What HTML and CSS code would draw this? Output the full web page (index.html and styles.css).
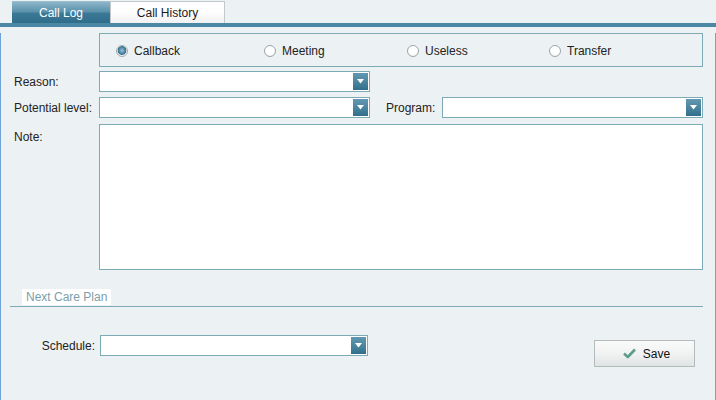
FILE: index.html
```html
<!DOCTYPE html>
<html>
<head>
<meta charset="utf-8">
<link rel="stylesheet" href="styles.css">
</head>
<body>
<div class="tabs">
  <div class="tab tab-active">Call Log</div>
  <div class="tab tab-plain">Call History</div>
</div>
<div class="strip"></div>
<div class="panel">
  <div class="radio-box">
    <label class="radio"><span class="dot dot-on"></span>Callback</label>
    <label class="radio"><span class="dot"></span>Meeting</label>
    <label class="radio"><span class="dot"></span>Useless</label>
    <label class="radio"><span class="dot"></span>Transfer</label>
  </div>

  <div class="row row-reason">
    <span class="lbl">Reason:</span>
    <div class="select sel-half"><span class="dd"><svg width="7" height="5" viewBox="0 0 7 5"><polygon points="0,0 7,0 3.5,4.5" fill="#fff"/></svg></span></div>
  </div>

  <div class="row row-potential">
    <span class="lbl">Potential level:</span>
    <div class="select sel-half"><span class="dd"><svg width="7" height="5" viewBox="0 0 7 5"><polygon points="0,0 7,0 3.5,4.5" fill="#fff"/></svg></span></div>
    <span class="lbl-prog">Program:</span>
    <div class="select sel-prog"><span class="dd"><svg width="7" height="5" viewBox="0 0 7 5"><polygon points="0,0 7,0 3.5,4.5" fill="#fff"/></svg></span></div>
  </div>

  <div class="row row-note">
    <span class="lbl lbl-note">Note:</span>
    <div class="note"></div>
  </div>

  <div class="section">
    <span class="legend">Next Care Plan</span>
  </div>

  <div class="row row-schedule">
    <span class="lbl-sched">Schedule:</span>
    <div class="select sel-sched"><span class="dd"><svg width="7" height="5" viewBox="0 0 7 5"><polygon points="0,0 7,0 3.5,4.5" fill="#fff"/></svg></span></div>
    <button class="save"><svg width="13" height="11" viewBox="0 0 13 11"><polyline points="1,5.5 4.8,9 12,1.5" fill="none" stroke="#5f9c8b" stroke-width="2.6" stroke-linejoin="round"/></svg>Save</button>
  </div>
</div>
</body>
</html>
```

FILE: styles.css
```css
html, body {
  margin: 0;
  padding: 0;
}
body {
  width: 716px;
  height: 400px;
  overflow: hidden;
  background: #ecf1f4;
  font-family: "Liberation Sans", Arial, sans-serif;
  font-size: 12px;
  color: #222;
}
.tabs {
  display: flex;
  align-items: flex-end;
  height: 23px;
  padding-left: 12px;
}
.tab {
  box-sizing: border-box;
  height: 22px;
  line-height: 23px;
  text-align: center;
}
.tab-active {
  width: 98px;
  color: #fff;
  background: linear-gradient(#8db5c8 0%, #5d93ad 45%, #3b7895 55%, #2f6e8b 100%);
  border-top: 1px solid #9cc0d0;
}
.tab-plain {
  width: 115px;
  margin-left: 0;
  color: #1a1a1a;
  background: linear-gradient(#ffffff 0%, #fdfdfd 50%, #f0f1f2 100%);
  border: 1px solid #c4c8cb;
  border-bottom: none;
}
.strip {
  height: 4px;
  background: #4b88a4;
}
.panel {
  box-sizing: border-box;
  height: 373px;
  border: 1px solid #6fa2d9;
  border-top: none;
  padding-left: 13px;
}
.radio-box {
  box-sizing: border-box;
  width: 604px;
  height: 34px;
  margin: 6px 0 0 85px;
  border: 1px solid #7eaab5;
  display: grid;
  grid-template-columns: 148px 143px 142px auto;
  align-items: center;
  padding: 2px 0 0 16px;
}
.radio {
  display: flex;
  align-items: center;
  color: #222;
}
.dot {
  box-sizing: border-box;
  width: 12px;
  height: 12px;
  border-radius: 50%;
  border: 1px solid #9ea4a8;
  background: radial-gradient(circle at 50% 40%, #ffffff 0%, #ffffff 55%, #e4e6e8 100%);
  margin-right: 6px;
}
.dot-on {
  border-color: #a6aaad;
  background: radial-gradient(circle at 50% 45%, #9fc3d6 0px, #3f7d9d 3.5px, #35718f 4px, #d8dcde 4.6px, #eef0f1 5px);
}
.row {
  display: flex;
  align-items: center;
}
.row-reason {
  margin-top: 4px;
}
.row-potential {
  margin-top: 5px;
}
.row-note {
  margin-top: 6px;
  align-items: flex-start;
}
.lbl {
  width: 85px;
}
.lbl-note {
  padding-top: 6px;
}
.lbl-prog {
  margin-left: 16px;
  width: 56px;
}
.select {
  box-sizing: border-box;
  height: 21px;
  background: #fff;
  border: 1px solid #7eaab5;
  display: flex;
  justify-content: flex-end;
  padding: 1px;
}
.sel-half {
  width: 271px;
}
.sel-prog {
  width: 261px;
}
.sel-sched {
  width: 268px;
}
.dd {
  width: 15px;
  height: 17px;
  background: linear-gradient(#6198b1 0%, #4c85a0 50%, #316f8b 100%);
  display: flex;
  align-items: center;
  justify-content: center;
}
.dd svg {
  display: block;
}
.note {
  box-sizing: border-box;
  width: 604px;
  height: 146px;
  background: #fff;
  border: 1px solid #7eaab5;
}
.section {
  box-sizing: border-box;
  margin: 19px 0 0 -4px;
  width: 693px;
  height: 18px;
  border-bottom: 1px solid #7eaab5;
}
.legend {
  display: inline-block;
  margin-left: 12px;
  height: 16px;
  line-height: 16px;
  padding: 0 4px;
  background: #fff;
  color: #7d9ea9;
}
.row-schedule {
  margin-top: 28px;
  align-items: flex-start;
}
.lbl-sched {
  width: 81px;
  margin-right: 5px;
  text-align: right;
  line-height: 22px;
}
.save {
  box-sizing: border-box;
  margin: 5px 0 0 226px;
  width: 101px;
  height: 27px;
  border: 1px solid #b3bbbb;
  background: linear-gradient(#f9faf9 0%, #f1f3f2 50%, #dfe3e3 100%);
  font-family: "Liberation Sans", Arial, sans-serif;
  font-size: 12px;
  color: #111;
  display: flex;
  align-items: center;
  justify-content: center;
  padding: 0 0 0 4px;
}
.save svg {
  margin-right: 7px;
}
```
